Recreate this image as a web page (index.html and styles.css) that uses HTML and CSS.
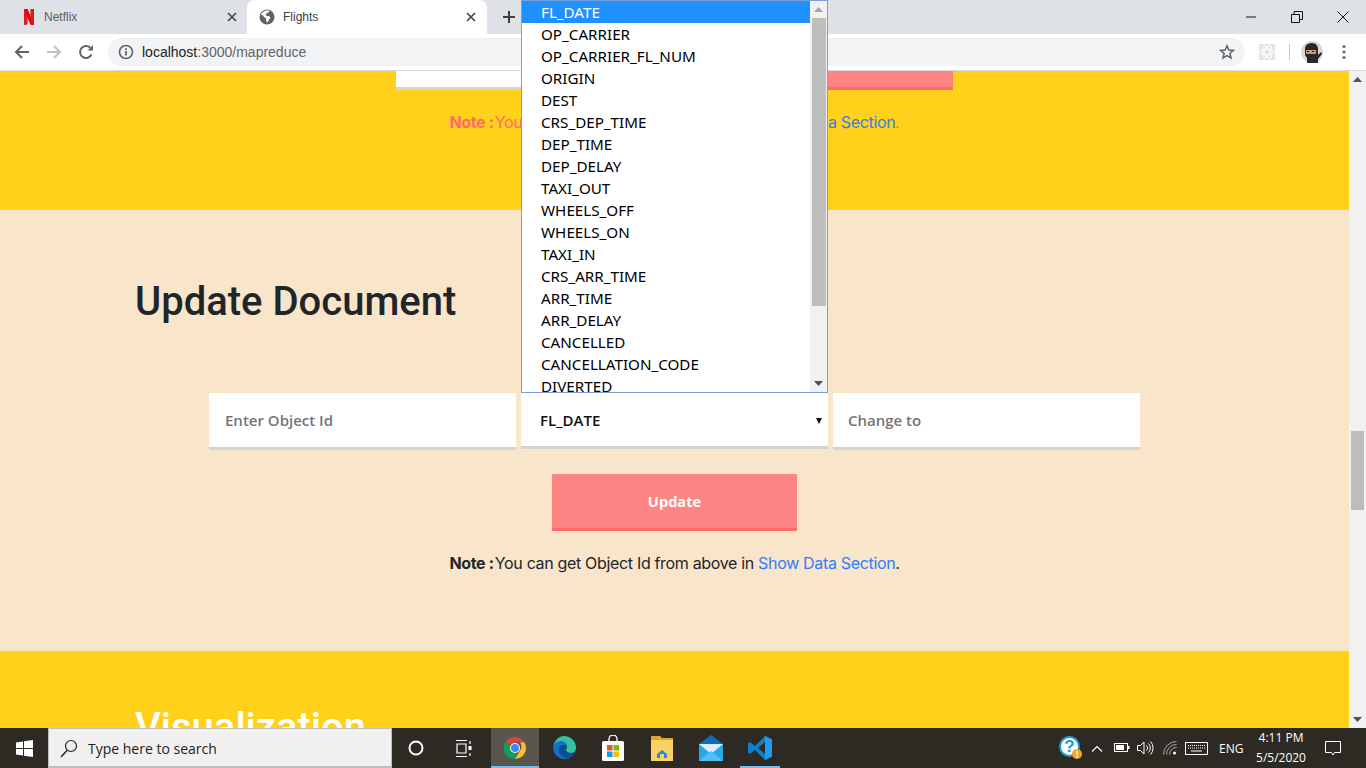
FILE: index.html
```html
<!DOCTYPE html>
<html lang="en">
<head>
<meta charset="utf-8">
<title>Flights</title>
<link rel="stylesheet" href="styles.css">
</head>
<body>
<div class="tabstrip">
  <div class="tab">
    <svg class="fav" width="16" height="16" viewBox="0 0 16 16"><path d="M3 0h3.6l2.8 8V0H13v16l-3.6-.5L6.6 7.8V15.600L3 16z" fill="#d81f26"/><path d="M3 0h3.600L13 16l-3.600-.5z" fill="#e50914"/></svg>
    <span class="tabname">Netflix</span>
    <svg class="tabx" width="10" height="10" viewBox="0 0 10 10"><path d="M1 1l8 8M9 1l-8 8" stroke="#45474a" stroke-width="1.700"/></svg>
  </div>
  <div class="tab active">
    <svg class="fav" width="16" height="16" viewBox="0 0 16 16"><circle cx="8" cy="8" r="7.500" fill="#5f6368"/><path d="M7 1.500C5 2 3 3.500 2 5.500l2 1 1.500 2 1.500.5v2l1 2.500 1-.5 1-2.500 1.500-1.500-1.500-2H7.500L6.500 5l2-1 1.500-1 .5-1.500z" fill="#fff"/></svg>
    <span class="tabname">Flights</span>
    <svg class="tabx" width="10" height="10" viewBox="0 0 10 10"><path d="M1 1l8 8M9 1l-8 8" stroke="#45474a" stroke-width="1.700"/></svg>
  </div>
  <svg class="newtab" width="12" height="12" viewBox="0 0 12 12"><path d="M6 0v12M0 6h12" stroke="#3c4043" stroke-width="2"/></svg>
  <div class="winctl">
    <svg width="12" height="12" viewBox="0 0 12 12"><path d="M1 6h10" stroke="#111" stroke-width="1"/></svg>
    <svg width="12" height="12" viewBox="0 0 12 12"><path d="M.5 3.500h8v8h-8zM3 3.500V.5h8.500v8H8.500" fill="none" stroke="#111"/></svg>
    <svg width="12" height="12" viewBox="0 0 12 12"><path d="M.5.5l11 11M11.500.5l-11 11" stroke="#111"/></svg>
  </div>
</div>
<div class="toolbar">
  <svg class="navbtn" width="16" height="16" viewBox="0 0 16 16"><path d="M15 8H2M8 2L2 8l6 6" fill="none" stroke="#5f6368" stroke-width="2"/></svg>
  <svg class="navbtn" width="16" height="16" viewBox="0 0 16 16"><path d="M1 8h13M8 2l6 6-6 6" fill="none" stroke="#bdc1c6" stroke-width="2"/></svg>
  <svg class="navbtn" width="16" height="16" viewBox="0 0 16 16"><path d="M13.500 10.500A6 6 0 1 1 12.300 3.800" fill="none" stroke="#5f6368" stroke-width="2"/><path d="M9.500 6.500H15V1z" fill="#5f6368"/></svg>
  <div class="omnibox">
    <svg width="16" height="16" viewBox="0 0 16 16"><circle cx="8" cy="8" r="6.500" fill="none" stroke="#5f6368" stroke-width="1.600"/><path d="M8 7v4.500M8 4.200v1.700" stroke="#5f6368" stroke-width="1.800"/></svg>
    <span class="url">localhost<span class="urlpath">:3000/mapreduce</span></span>
    <svg class="star" width="16" height="16" viewBox="0 0 16 16"><path d="M8 1.800l1.800 4.200 4.600.4-3.500 3 1.100 4.500L8 11.500 4 13.900l1.100-4.500-3.500-3 4.600-.4z" fill="none" stroke="#5f6368" stroke-width="1.500"/></svg>
  </div>
  <div class="extension">
    <svg width="16" height="16" viewBox="0 0 16 16"><g fill="none" stroke="#fff" stroke-width="1"><ellipse cx="8" cy="8" rx="7" ry="3"/><ellipse cx="8" cy="8" rx="7" ry="3" transform="rotate(60 8 8)"/><ellipse cx="8" cy="8" rx="7" ry="3" transform="rotate(120 8 8)"/></g></svg>
  </div>
  <div class="sep"></div>
  <svg class="avatar" width="22" height="22" viewBox="0 0 22 22"><circle cx="11" cy="11" r="11" fill="#d8d8d8"/><path d="M4 8c0-4 3-6 7-6s6 3 6 6v6l3-3 1 2-4 5v4H6v-5l-2-3z" fill="#26282b"/><rect x="5" y="9" width="10" height="4" fill="#c89a6e"/><rect x="6" y="10" width="2" height="1" fill="#222"/><rect x="11" y="10" width="2" height="1" fill="#222"/></svg>
  <svg class="kebab" width="4" height="16" viewBox="0 0 4 16"><circle cx="2" cy="2.500" r="1.500" fill="#5f6368"/><circle cx="2" cy="8" r="1.500" fill="#5f6368"/><circle cx="2" cy="13.500" r="1.500" fill="#5f6368"/></svg>
</div>

<div class="viewport">
  <main class="page">
    <section class="band yellow first">
      <div class="cutrow">
        <div class="cutinput"></div>
        <div class="cutbtn"></div>
      </div>
      <p class="note pinknote"><strong>Note :</strong>You can get Object Id from above in <a>Show Data Section</a>.</p>
    </section>
    <section class="band beige">
      <h1 class="title">Update Document</h1>
      <div class="fields">
        <div class="field">Enter Object Id</div>
        <div class="field pick">FL_DATE<svg width="6" height="6" viewBox="0 0 6 6"><path d="M0 0h6L3 6z" fill="#111"/></svg></div>
        <div class="field">Change to</div>
      </div>
      <div class="btn">Update</div>
      <p class="note"><strong>Note :</strong>You can get Object Id from above in <a>Show Data Section</a>.</p>
    </section>
    <section class="band yellow">
      <h1 class="title white">Visualization</h1>
    </section>
  </main>
  <div class="pagebar">
    <svg class="arrow" width="9" height="5" viewBox="0 0 9 5"><path d="M0 5h9L4.500 0z" fill="#505050"/></svg>
    <div class="pagethumb"></div>
    <svg class="arrow" width="9" height="5" viewBox="0 0 9 5"><path d="M0 0h9L4.500 5z" fill="#505050"/></svg>
  </div>
</div>

<div class="dropdown">
  <ul class="options">
    <li class="on">FL_DATE</li><li>OP_CARRIER</li><li>OP_CARRIER_FL_NUM</li><li>ORIGIN</li><li>DEST</li><li>CRS_DEP_TIME</li><li>DEP_TIME</li><li>DEP_DELAY</li><li>TAXI_OUT</li><li>WHEELS_OFF</li><li>WHEELS_ON</li><li>TAXI_IN</li><li>CRS_ARR_TIME</li><li>ARR_TIME</li><li>ARR_DELAY</li><li>CANCELLED</li><li>CANCELLATION_CODE</li><li>DIVERTED</li>
  </ul>
  <div class="listbar">
    <svg width="9" height="5" viewBox="0 0 9 5"><path d="M0 5h9L4.500 0z" fill="#a3a3a3"/></svg>
    <div class="listthumb"></div>
    <svg width="9" height="5" viewBox="0 0 9 5"><path d="M0 0h9L4.500 5z" fill="#505050"/></svg>
  </div>
</div>

<footer class="taskbar">
  <div class="tb-start">
    <svg width="17" height="17" viewBox="0 0 17 17"><path d="M0 2.500L7 1.500V8H0zM8 1.300L17 0v8H8zM0 9h7v6.500L0 14.500zM8 9h9v8l-9-1.300z" fill="#fff"/></svg>
  </div>
  <div class="tb-search">
    <svg width="20" height="20" viewBox="0 0 20 20"><circle cx="12" cy="8" r="5.500" fill="none" stroke="#222" stroke-width="1.200"/><path d="M8 12.500L2 19" stroke="#222" stroke-width="1.500"/></svg>
    <span>Type here to search</span>
  </div>
  <div class="tb-app cortana"><svg width="16" height="16" viewBox="0 0 16 16"><circle cx="8" cy="8" r="6.500" fill="none" stroke="#fff" stroke-width="2"/></svg></div>
  <div class="tb-app narrow"><svg width="17" height="17" viewBox="0 0 17 17"><path d="M1 .5h11M1 16.500h11M2 4h9v9H2z" fill="none" stroke="#fff" stroke-width="1.200"/><path d="M15 1v3M15 13v3" stroke="#fff" stroke-width="1.200"/><rect x="13.500" y="6" width="3" height="4" fill="#fff"/></svg></div>
  <div class="tb-app tile running"><svg width="24" height="24" viewBox="0 0 24 24"><path d="M12 1a11 11 0 0 1 9.500 5.500H12a5.500 5.500 0 0 0-5.200 3.700L3.300 4.800A11 11 0 0 1 12 1z" fill="#db4437"/><path d="M21.500 6.500A11 11 0 0 1 12 23l4.800-8.300a5.500 5.500 0 0 0 0-8.200z" fill="#fbc02d"/><path d="M3.300 4.800l4.700 8.200a5.500 5.500 0 0 0 6 4.200L12 23A11 11 0 0 1 3.300 4.800z" fill="#0f9d58"/><circle cx="12" cy="12" r="5" fill="#fff"/><circle cx="12" cy="12" r="4" fill="#4285f4"/></svg></div>
  <div class="tb-app"><svg width="24" height="24" viewBox="0 0 24 24"><path d="M12 0a12 12 0 0 1 12 12c0 3-2 5-5 5-3 0-5-1-5-3 0-1 1-2 1-3 0-3-3-5-6-5-4 0-7 3-8 6C2 5 6 0 12 0z" fill="#35c1a0"/><path d="M1 12c0-4 4-7 8-7 3 0 6 2 6 5-3-2-8-1-8 4 0 4 4 8 9 8 1 0 2 0 3-.5A12 12 0 0 1 1 12z" fill="#1173c8"/><path d="M7 14c0-5 5-6 8-4 0 1-1 2-1 3 0 3 2 4 5 4 2 0 4-1 5-3-1 5-5 8-8 8-5 0-9-4-9-8z" fill="#0c4f94"/></svg></div>
  <div class="tb-app"><svg width="24" height="26" viewBox="0 0 24 26"><path d="M8 7V4a4 4 0 0 1 8 0v3" fill="none" stroke="#fff" stroke-width="1.300"/><rect x="1" y="6" width="22" height="20" rx="1.500" fill="#fff"/><rect x="6" y="10" width="5.500" height="5.500" fill="#f25022"/><rect x="12.500" y="10" width="5.500" height="5.500" fill="#7fba00"/><rect x="6" y="16.500" width="5.500" height="5.500" fill="#00a4ef"/><rect x="12.500" y="16.500" width="5.500" height="5.500" fill="#ffb900"/></svg></div>
  <div class="tb-app"><svg width="22" height="26" viewBox="0 0 22 26"><path d="M0 1h9l2 2h11v23H0z" fill="#e0a526"/><rect x="0" y="5" width="22" height="21" fill="#fad165"/><path d="M6 19l5-4 5 4v4H6z" fill="#2d8ad6"/><rect x="9" y="19" width="4" height="4" fill="#fad165"/></svg></div>
  <div class="tb-app"><svg width="24" height="26" viewBox="0 0 24 26"><path d="M0 9L12 0l12 9v17H0z" fill="#0f6cbd"/><rect x="0" y="9" width="24" height="17" fill="#28a8ea"/><path d="M0 9l12 10L24 9" fill="#d8eefc"/><path d="M0 26l12-10 12 10z" fill="#50bff5"/></svg></div>
  <div class="tb-app running short"><svg width="26" height="26" viewBox="0 0 26 26"><path d="M18 1l7 3.500v17L18 25 8 15l-5 4-2-1.500v-9L3 7l5 4z" fill="#0f7fcc"/><path d="M18 7v12l-7-6z" fill="#2d2a24"/><path d="M18 1l7 3.500v17L18 25z" fill="#1f9cf0"/></svg></div>
  <div class="tray">
    <div class="help"><svg width="24" height="24" viewBox="0 0 24 24"><circle cx="10.500" cy="10.500" r="9.500" fill="#fff" stroke="#1c9ad6" stroke-width="2"/><circle cx="18" cy="18" r="5" fill="#f5a623"/><path d="M18 15v4M18 20v1.500" stroke="#fff" stroke-width="1.400"/></svg><span>?</span></div>
    <svg class="tchev" width="12" height="7" viewBox="0 0 12 7"><path d="M1 6.500l5-5 5 5" fill="none" stroke="#fff" stroke-width="1.100"/></svg>
    <svg class="tbatt" width="16" height="10" viewBox="0 0 16 10"><rect x=".5" y=".5" width="13" height="8" fill="none" stroke="#fff"/><rect x="2" y="2" width="8" height="5" fill="#fff"/><rect x="14" y="3" width="1.500" height="3" fill="#fff"/></svg>
    <svg class="tvol" width="17" height="14" viewBox="0 0 17 14"><path d="M.5 4.500h3l3.500-3.500v12l-3.500-3.500h-3z" fill="none" stroke="#fff"/><path d="M9.500 4.500a3.500 3.500 0 0 1 0 5M11.500 2.500a6.500 6.500 0 0 1 0 9M13.500 .5a9.500 9.500 0 0 1 0 13" fill="none" stroke="#fff"/></svg>
    <svg class="twifi" width="15" height="14" viewBox="0 0 15 14"><path d="M.5 13.500a13 13 0 0 1 13-13M3.500 13.500a10 10 0 0 1 10-10M6.500 13.500a7 7 0 0 1 7-7" fill="none" stroke="#aaa"/><circle cx="11.500" cy="12" r="1.500" fill="#fff"/></svg>
    <svg class="tkbd" width="23" height="13" viewBox="0 0 23 13"><rect x=".5" y=".5" width="22" height="12" fill="none" stroke="#fff"/><path d="M3 3.500h17M3 6h17" stroke="#fff" stroke-dasharray="1 1"/><path d="M6 9h11" stroke="#fff"/></svg>
    <span class="lang">ENG</span>
    <div class="clock"><span>4:11 PM</span><span>5/5/2020</span></div>
    <svg class="tnote" width="16" height="15" viewBox="0 0 16 15"><path d="M.5.5h15v11H9.500l-1.500 2.500-1.500-2.500h-6z" fill="none" stroke="#fff"/></svg>
  </div>
</footer>
</body>
</html>
```

FILE: styles.css
```css
* { box-sizing: border-box; }
html, body { margin: 0; height: 768px; overflow: hidden; }
body { position: relative; display: flex; flex-direction: column; width: 1366px; background: #fff; font-family: "Open Sans", sans-serif; }

/* browser frame */
.tabstrip { height: 34px; flex: none; background: #dee1e6; display: flex; align-items: center; }
.tab { width: 247px; height: 34px; display: flex; align-items: center; padding: 0 8px 0 21px; }
.tab.active { width: 240px; padding-left: 12px; background: #fff; border-radius: 8px 8px 0 0; }
.fav { flex: none; }
.tabname { flex: 1; margin-left: 7px; font: 12px "Liberation Sans", sans-serif; color: #5b5e63; }
.active .tabname { margin-left: 8px; color: #3c4043; }
.tabx { flex: none; margin-right: 2px; }
.active .tabx { margin-right: 3px; }
.newtab { margin-left: 16px; }
.winctl { margin-left: auto; display: flex; gap: 34px; padding-right: 17px; }
.toolbar { height: 37px; flex: none; background: #fff; border-bottom: 1px solid #d7d9dc; display: flex; align-items: center; padding: 0 14px 0 14px; }
.navbtn { flex: none; margin-right: 16px; }
.omnibox { width: 1137px; height: 28px; margin-left: -2px; margin-right: 14px; border-radius: 14px; background: #f1f3f4; display: flex; align-items: center; padding: 0 10px; }
.url { margin-left: 8px; font: 14px "Liberation Sans", sans-serif; color: #202124; flex: 1; }
.urlpath { color: #5f6368; }
.extension { width: 16px; height: 16px; background: #e4e4e4; flex: none; }
.extension svg { display: block; }
.sep { width: 1px; height: 16px; background: #c8c8c8; margin: 0 11px 0 14px; flex: none; }
.avatar { flex: none; margin-right: 19px; }
.kebab { flex: none; }

/* page */
.viewport { height: 657px; flex: none; display: flex; overflow: hidden; }
.page { width: 1349px; flex: none; }
.band { width: 100%; }
.yellow { background: #ffd11a; }
.beige { background: #f9e5c9; height: 441px; padding-top: 65px; }
.first { height: 139px; }
.cutrow { width: 557px; height: 19px; margin-left: 396px; display: flex; }
.cutinput { flex: 1; background: #fff; border-bottom: 3px solid #d3d3d3; }
.cutbtn { flex: 1; background: #ff8585; border-bottom: 3px solid #ff6b6b; }
.note { margin: 0; text-align: center; font: 400 16px/24px Inter, sans-serif; letter-spacing: -.33px; color: #212529; }
.note strong { font-weight: 700; margin-right: 1px; }
.note a { color: #2b7fff; }
.first .note { margin-top: 20px; }
.pinknote { color: #ff6b6b; }
.pinknote a { color: #2f80ed; }
.title { margin: 0 0 0 135px; font: 500 40px/54px Roboto, sans-serif; color: #212529; }
.title.white { color: #fff; padding-top: 50px; }
.fields { display: flex; gap: 5px; width: 931px; margin: 64px 0 0 209px; align-items: flex-start; }
.field { width: 307px; height: 57px; padding: 0 16px; background: #fff; border-bottom: 3px solid #d3d3d3; display: flex; align-items: center; font: 600 15px "Open Sans", sans-serif; color: #757575; }
.field:last-child { padding-left: 15px; }
.pick { height: 56px; padding: 0 6px 0 19px; justify-content: space-between; color: #111; }
.pick svg { margin-top: 2px; }
.btn { width: 245px; height: 57px; margin: 24px 0 0 552px; background: #ff8585; border-bottom: 3px solid #ff6b6b; color: #fff; font: 700 14.600px "Open Sans", sans-serif; display: flex; align-items: center; justify-content: center; }
.beige .note { margin-top: 20px; }
.pagebar { width: 17px; flex: none; background: #f1f1f1; display: flex; flex-direction: column; align-items: center; padding: 6px 0; }
.arrow { flex: none; }
.pagethumb { width: 13px; height: 79px; margin-top: 349px; margin-bottom: auto; background: #bdbdbd; }

/* open select list */
.dropdown { position: absolute; left: 521px; top: 0; width: 307px; height: 393px; border: 1px solid #7a9fd8; background: #fff; display: flex; }
.options { flex: 1; margin: 0; padding: 0; list-style: none; overflow: hidden; }
.options li { height: 22px; padding-left: 19px; font: 15.200px/22px "Noto Sans", sans-serif; color: #000; }
.options li.on { background: #1e90ff; color: #fff; }
.listbar { width: 17px; flex: none; background: #f1f1f1; display: flex; flex-direction: column; align-items: center; padding-top: 6px; }
.listthumb { width: 14px; height: 288px; margin: 6px 0 auto; background: #bebebe; }
.listbar svg:last-child { margin-bottom: 6px; }

/* taskbar */
.taskbar { height: 40px; flex: none; background: #2d2a24; display: flex; align-items: center; color: #fff; }
.tb-start { width: 48px; height: 40px; display: flex; align-items: center; justify-content: center; }
.tb-search { width: 344px; height: 40px; background: #f0f0f0; border: 1px solid #bdbdbd; border-width: 1px 1px 2px 1px; display: flex; align-items: center; padding-left: 10px; gap: 9px; color: #222; font: 14px "Open Sans", sans-serif; }
.tb-search span { padding-top: 1px; }
.tb-app { width: 49px; height: 40px; display: flex; align-items: center; justify-content: center; flex: none; }
.tb-app.cortana { width: 48px; }
.tb-app.narrow { width: 47px; margin-right: 4px; }
.tb-app.tile { width: 48px; background: #5a564e; }
.running { box-shadow: inset 0 -2px #76b9ed; }
.short { box-shadow: none; position: relative; }
.short::after { content: ""; position: absolute; left: 5px; right: 4px; bottom: 0; height: 2px; background: #76b9ed; }
.tray { margin-left: auto; display: flex; align-items: center; padding-right: 25px; font: 12px "Open Sans", sans-serif; }
.help { position: relative; width: 24px; height: 24px; margin-right: 8px; }
.help span { position: absolute; left: 4px; top: 1px; width: 13px; text-align: center; font: 700 17px/19px "Liberation Sans", sans-serif; color: #1c9ad6; }
.tchev { margin-right: 11px; }
.tbatt { margin-right: 7px; }
.tvol { margin-right: 9px; }
.twifi { margin-right: 7px; }
.tkbd { margin-right: 11px; }
.lang { width: 24px; margin-right: 7px; }
.clock { width: 62px; display: flex; flex-direction: column; align-items: center; line-height: 20px; margin-right: 13px; }
```
